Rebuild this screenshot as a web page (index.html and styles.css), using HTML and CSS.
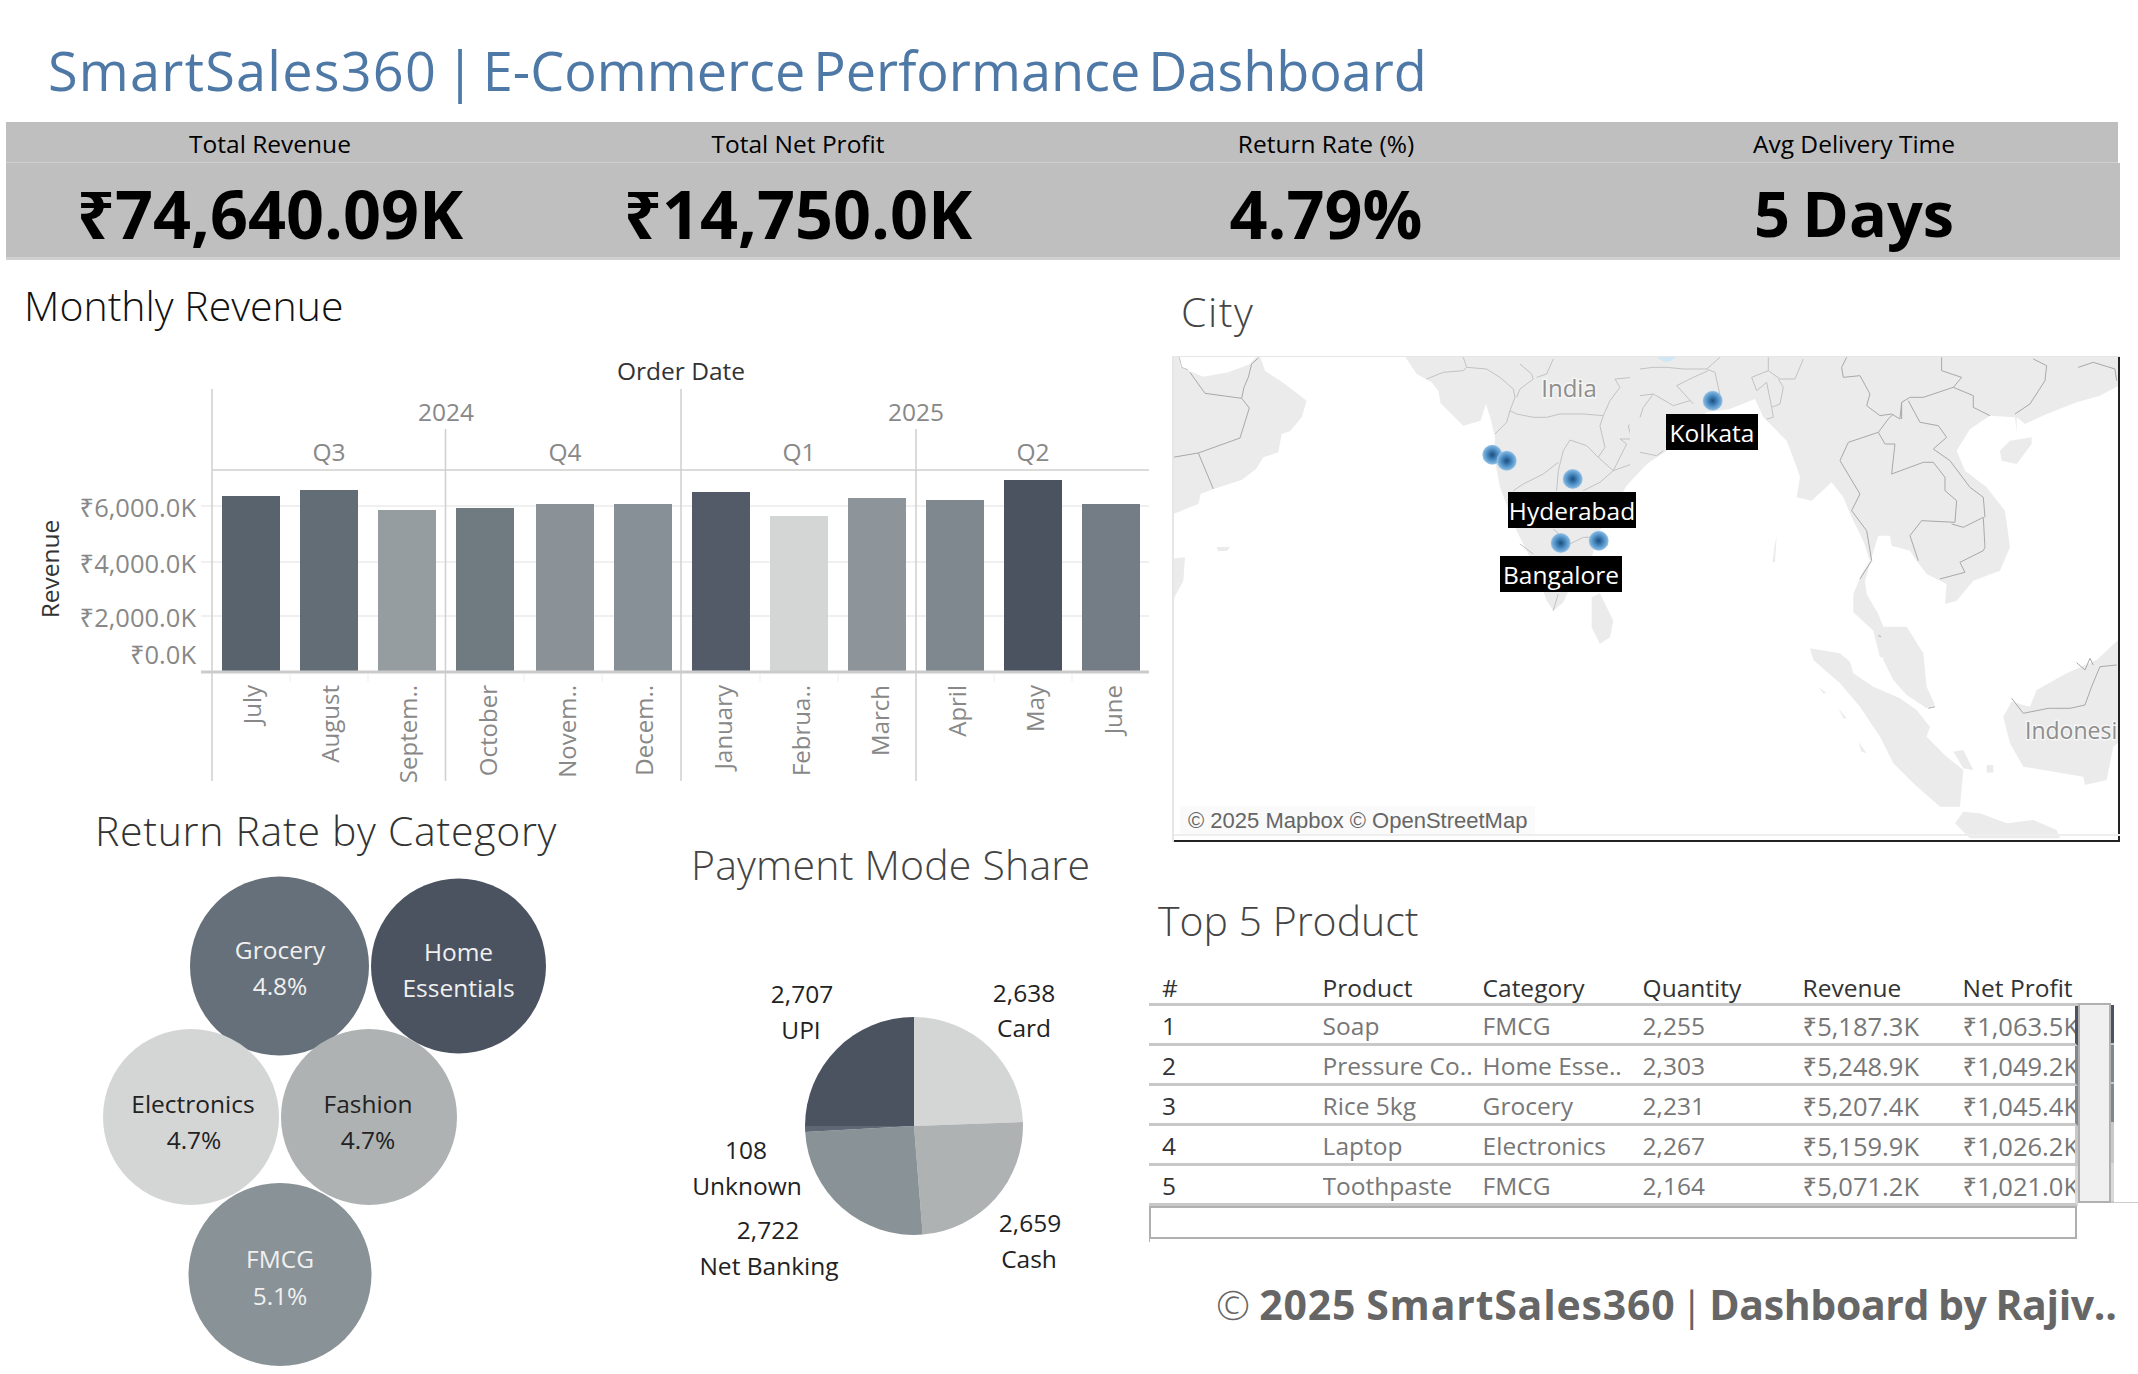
FILE: index.html
```html
<!DOCTYPE html>
<html>
<head>
  <meta charset="utf-8">
  <title>SmartSales360</title>
  <link rel="stylesheet" href="styles.css">
</head>
<body>
  <div class="page">
    <h1 class="page-title"><span class="brand">SmartSales360</span> | E-Commerce Performance Dashboard</h1>

    <div class="kpi-band">
      <div class="kpi-row kpi-labels">
        <div>Total Revenue</div>
        <div>Total Net Profit</div>
        <div>Return Rate (%)</div>
        <div>Avg Delivery Time</div>
      </div>
      <div class="kpi-row kpi-values">
        <div>₹74,640.09K</div>
        <div>₹14,750.0K</div>
        <div>4.79%</div>
        <div class="kpi-days">5 Days</div>
      </div>
    </div>

    <div class="main">
      <div class="left-col">
        <section class="monthly">
          <h2 class="sheet-title monthly-title">Monthly Revenue</h2>
          <svg class="chart" width="1149" height="450" viewBox="0 340 1149 450">
            <text class="axis-title" x="681" y="380" text-anchor="middle">Order Date</text>
            <text class="head-label" x="446" y="421" text-anchor="middle">2024</text>
            <text class="head-label" x="916" y="421" text-anchor="middle">2025</text>
            <text class="head-label" x="329" y="461" text-anchor="middle">Q3</text>
            <text class="head-label" x="565" y="461" text-anchor="middle">Q4</text>
            <text class="head-label" x="799" y="461" text-anchor="middle">Q1</text>
            <text class="head-label" x="1033" y="461" text-anchor="middle">Q2</text>

            <g class="grid-lines">
              <line x1="201" y1="506" x2="1150" y2="506"/>
              <line x1="201" y1="562" x2="1150" y2="562"/>
              <line x1="201" y1="616" x2="1150" y2="616"/>
            </g>

            <rect x="222" y="496" width="58" height="175" fill="#59636e"/>
            <rect x="300" y="490" width="58" height="181" fill="#636d76"/>
            <rect x="378" y="510" width="58" height="161" fill="#959da0"/>
            <rect x="456" y="508" width="58" height="163" fill="#6f7a81"/>
            <rect x="536" y="504" width="58" height="167" fill="#8a9298"/>
            <rect x="614" y="504" width="58" height="167" fill="#879096"/>
            <rect x="692" y="492" width="58" height="179" fill="#535b68"/>
            <rect x="770" y="516" width="58" height="155" fill="#d4d5d5"/>
            <rect x="848" y="498" width="58" height="173" fill="#8d959b"/>
            <rect x="926" y="500" width="58" height="171" fill="#7f888e"/>
            <rect x="1004" y="480" width="58" height="191" fill="#4b5260"/>
            <rect x="1082" y="504" width="58" height="167" fill="#747d85"/>

            <g class="frame-lines">
              <line x1="212" y1="389" x2="212" y2="781"/>
              <line x1="681" y1="389" x2="681" y2="781"/>
              <line x1="1150" y1="389" x2="1150" y2="781"/>
              <line x1="445.5" y1="429" x2="445.5" y2="781"/>
              <line x1="916" y1="429" x2="916" y2="781"/>
              <line x1="212" y1="470" x2="1150" y2="470"/>
            </g>
            <line class="baseline" x1="201" y1="672" x2="1150" y2="672"/>
            <g class="month-ticks">
              <line x1="290" y1="674" x2="290" y2="682"/>
              <line x1="368" y1="674" x2="368" y2="682"/>
              <line x1="524" y1="674" x2="524" y2="682"/>
              <line x1="602" y1="674" x2="602" y2="682"/>
              <line x1="760" y1="674" x2="760" y2="682"/>
              <line x1="838" y1="674" x2="838" y2="682"/>
              <line x1="994" y1="674" x2="994" y2="682"/>
              <line x1="1072" y1="674" x2="1072" y2="682"/>
            </g>

            <text class="axis-title" transform="translate(59 569) rotate(-90)" text-anchor="middle">Revenue</text>
            <text class="tick-label" x="196" y="517" text-anchor="end">₹6,000.0K</text>
            <text class="tick-label" x="196" y="573" text-anchor="end">₹4,000.0K</text>
            <text class="tick-label" x="196" y="627" text-anchor="end">₹2,000.0K</text>
            <text class="tick-label" x="196" y="664" text-anchor="end">₹0.0K</text>

            <g class="month-labels">
              <text transform="translate(261 685) rotate(-90)" text-anchor="end">July</text>
              <text transform="translate(339 685) rotate(-90)" text-anchor="end">August</text>
              <text transform="translate(417 685) rotate(-90)" text-anchor="end">Septem..</text>
              <text transform="translate(497 685) rotate(-90)" text-anchor="end">October</text>
              <text transform="translate(576 685) rotate(-90)" text-anchor="end">Novem..</text>
              <text transform="translate(653 685) rotate(-90)" text-anchor="end">Decem..</text>
              <text transform="translate(732 685) rotate(-90)" text-anchor="end">January</text>
              <text transform="translate(810 685) rotate(-90)" text-anchor="end">Februa..</text>
              <text transform="translate(889 685) rotate(-90)" text-anchor="end">March</text>
              <text transform="translate(966 685) rotate(-90)" text-anchor="end">April</text>
              <text transform="translate(1044 685) rotate(-90)" text-anchor="end">May</text>
              <text transform="translate(1122 685) rotate(-90)" text-anchor="end">June</text>
            </g>
          </svg>
        </section>

        <div class="bottom-row">
          <section class="returns">
            <h2 class="sheet-title returns-title">Return Rate by Category</h2>
            <svg class="chart" width="640" height="504" viewBox="0 870 640 504">
              <circle cx="279.5" cy="966" r="89.5" fill="#66707a"/>
              <circle cx="458.5" cy="966" r="87.5" fill="#4b5361"/>
              <circle cx="191" cy="1117" r="88" fill="#d4d5d5"/>
              <circle cx="369" cy="1117" r="88" fill="#aeb2b3"/>
              <circle cx="280" cy="1274.5" r="91.5" fill="#899297"/>
              <g class="bubble-text light" text-anchor="middle">
                <text x="280" y="959">Grocery</text>
                <text x="280" y="995">4.8%</text>
                <text x="458.5" y="961">Home</text>
                <text x="458.5" y="997">Essentials</text>
                <text x="280" y="1268">FMCG</text>
                <text x="280" y="1305">5.1%</text>
              </g>
              <g class="bubble-text dark" text-anchor="middle">
                <text x="193" y="1113">Electronics</text>
                <text x="194" y="1149">4.7%</text>
                <text x="368" y="1113">Fashion</text>
                <text x="368" y="1149">4.7%</text>
              </g>
            </svg>
          </section>

          <section class="payments">
            <h2 class="sheet-title payments-title">Payment Mode Share</h2>
            <svg class="chart" width="509" height="474" viewBox="640 900 509 474">
              <path d="M914 1126 L914 1017 A109 109 0 0 1 1022.9 1122 Z" fill="#d4d5d5"/>
              <path d="M914 1126 L1022.9 1122 A109 109 0 0 1 922.7 1234.6 Z" fill="#aeb2b3"/>
              <path d="M914 1126 L922.7 1234.6 A109 109 0 0 1 805.2 1132 Z" fill="#899297"/>
              <path d="M914 1126 L805.2 1132 A109 109 0 0 1 805 1126 Z" fill="#5e6874"/>
              <path d="M914 1126 L805 1126 A109 109 0 0 1 914 1017 Z" fill="#4b5361"/>
              <g class="pie-text" text-anchor="middle">
                <text x="802" y="1003">2,707</text>
                <text x="801" y="1039">UPI</text>
                <text x="1024" y="1002">2,638</text>
                <text x="1024" y="1037">Card</text>
                <text x="746" y="1159">108</text>
                <text x="747" y="1195">Unknown</text>
                <text x="768" y="1239">2,722</text>
                <text x="769" y="1275">Net Banking</text>
                <text x="1030" y="1232">2,659</text>
                <text x="1029" y="1268">Cash</text>
              </g>
            </svg>
          </section>
        </div>
      </div>

      <div class="right-col">
        <h2 class="sheet-title city-title">City</h2>
        <div class="map">
          <svg width="948" height="486" viewBox="1172 356 948 486">
            <defs>
              <radialGradient id="pin">
                <stop offset="0" stop-color="#1f4e7c"/>
                <stop offset="0.25" stop-color="#2f6aa0"/>
                <stop offset="0.55" stop-color="#4f8fc4"/>
                <stop offset="0.85" stop-color="#78afdb"/>
                <stop offset="1" stop-color="#a7cbe9"/>
              </radialGradient>
            </defs>

            <!-- left half, coords are 3x from the map corner -->
            <g transform="translate(1170 354) scale(0.3333)">
              <g class="land">
                <path d="M0 0 L28 0 30 38 60 52 100 68 175 55 235 32 268 0 285 50 345 90 410 140 395 190 360 232 335 240 325 295 280 310 258 345 215 378 130 405 92 420 85 450 0 484Z"/>
                <path d="M450 0 L700 0 740 60 785 85 805 110 812 148 880 215 932 200 948 150 962 195 975 250 972 305 990 400 1040 530 1100 650 1130 740 1150 770 1180 745 1205 690 1265 610 1290 530 1320 480 1370 395 1430 330 1530 265 1530 0Z"/>
                <path d="M1265 730 L1290 718 1330 800 1320 850 1290 870 1265 820Z"/>
                <path d="M140 580 L180 578 172 590 145 592Z"/>
                <path d="M0 615 L45 610 40 680 0 755Z"/>
              </g>
              <g class="borders">
                <path class="dark-border" d="M60 55 L105 118 215 133 238 162 210 252 85 297 8 310M85 297 L130 405M215 133 L222 100 235 70 245 30 265 12"/>
                <path d="M28 10 L35 40 55 48M770 75 L820 55 880 50 890 40 880 10M890 40 L950 45 990 70 1030 105 1035 130 1020 170 1010 205 975 240M1020 170 L1040 180 1090 190 1130 190 1170 180 1240 180 1300 185 1320 140 1350 100 1335 75 1390 70 1415 65 1410 40 1415 10M1300 185 L1290 215 1305 280 1285 310 1330 350 1370 270 1350 255 1385 255 1375 215 1415 190 1420 145 1460 135 1500 155M1160 410 L1165 350 1180 290 1200 258 1250 275 1285 310M1030 410 L1060 390 1120 360 1165 325M1240 410 L1290 385 1330 350 1400 325 1450 300M1050 30 L1085 60 1090 75 1050 105 1040 130M1150 15 L1130 60 1100 70M1150 525 L1200 570 1240 550 1280 550M1150 770 L1165 720M1050 570 L1090 600"/>
              </g>
            </g>

            <!-- right half -->
            <g transform="translate(1640 354) scale(0.3333)">
              <g class="land">
                <path d="M-30 0 L1445 0 1445 90 1380 125 1310 145 1220 180 1155 210 1130 190 1130 235 1125 190 1050 185 990 225 950 290 975 350 1040 400 1095 470 1110 580 1080 650 1000 680 950 740 915 750 920 690 860 660 830 620 810 590 755 575 750 545 715 545 695 610 675 680 680 720 715 780 735 830 800 860 850 910 720 910 700 830 640 775 640 720 665 660 690 620 670 560 635 490 610 430 575 385 515 440 470 430 480 370 470 340 440 260 370 190 345 135 270 165 200 175 80 280 -30 375Z"/>
                <path d="M1080 290 L1110 260 1175 250 1175 270 1130 330 1085 320Z"/>
                <path d="M410 545 L405 625 398 625 403 580Z"/>
              </g>
              <g class="borders">
                <path d="M0 45 L40 40 80 40 130 45 200 45 240 10M200 45 L225 55 235 100 245 145M110 95 L160 70 205 50M110 95 L160 150M40 120 L10 160 0 190M0 125 L40 120 100 155 150 140M335 70 L385 50 385 10M335 70 L350 110 380 85 395 160 400 190 380 195M385 50 L420 75 465 75 490 15M415 75 L430 100 420 150 395 160M0 295 L50 305 70 290"/>
                <path class="dark-border" d="M620 10 L605 40 610 70 660 65 690 120 680 155 720 185 755 180 780 195 785 145 810 130 850 130 940 100 1000 125 1000 160 1050 185M905 10 L905 50 965 70 940 100M1180 15 L1220 35 1215 80 1170 150 1125 180M1315 40 L1360 25 1425 45 1430 80M785 145 L785 195M805 140 L840 205 895 215 920 250 880 285 930 320 990 400 1030 430 1035 490M715 235 L745 195 760 180M715 235 L625 265 600 320 660 420 635 470 680 530 695 620 660 675M715 235 L735 270 765 270 755 360 850 325 880 325 915 370 915 410 950 440 945 505 845 500 810 545 835 620M935 510 L970 520 1030 490 1035 580 1030 590 960 625 975 655 900 675M715 845 L760 860 755 880 800 855"/>
              </g>
            </g>

            <!-- bottom right, islands -->
            <g transform="translate(1640 630) scale(0.3333)">
              <g class="land">
                <path d="M510 55 L600 70 630 95 640 130 700 170 780 205 830 240 870 290 860 320 920 380 970 420 960 530 900 530 820 460 760 400 720 320 660 230 600 160 520 90Z"/>
                <path d="M970 545 L1020 550 1100 580 1180 570 1250 600 1260 625 990 625 945 580Z"/>
                <path d="M720 -10 L800 -10 850 70 860 170 885 225 860 235 800 195 760 150 730 90Z"/>
                <path d="M1445 20 L1370 90 1280 130 1190 180 1170 230 1115 215 1090 260 1110 340 1150 410 1210 420 1330 440 1335 465 1400 450 1420 350 1445 330Z"/>
                <path d="M535 170 L560 190 550 190Z"/>
                <path d="M595 235 L620 265 610 265Z"/>
                <path d="M655 335 L680 370 665 365Z"/>
                <path d="M1040 405 L1060 405 1060 428 1040 428Z"/>
                <path d="M940 365 L970 360 1000 420 970 415Z"/>
              </g>
              <g class="borders">
                <path class="dark-border" d="M1115 205 L1150 250 1225 235 1290 235 1335 225 1355 170 1380 110 1430 105M1310 98 L1335 120 1350 85 1360 105M865 235 L885 230"/>
              </g>
            </g>

            <text class="map-place" x="1569" y="397" text-anchor="middle">India</text>
            <text class="map-place indonesia" x="2025" y="739">Indonesi</text>

            <circle cx="1666.7" cy="352" r="10" fill="#cfe6f5"/>
            <circle cx="1492.3" cy="454.7" r="10" fill="url(#pin)"/>
            <circle cx="1506.7" cy="460.7" r="10" fill="url(#pin)"/>
            <circle cx="1572.7" cy="479" r="10" fill="url(#pin)"/>
            <circle cx="1560.7" cy="543" r="10" fill="url(#pin)"/>
            <circle cx="1598.7" cy="540.7" r="10" fill="url(#pin)"/>
            <circle cx="1712.7" cy="400.7" r="10" fill="url(#pin)"/>
          </svg>
          <span class="pin-label kolkata">Kolkata</span>
          <span class="pin-label hyderabad">Hyderabad</span>
          <span class="pin-label bangalore">Bangalore</span>
          <div class="attribution">© 2025 Mapbox © OpenStreetMap</div>
        </div>

        <h2 class="sheet-title top-title">Top 5 Product</h2>
        <div class="tbl-head">
          <div>#</div><div>Product</div><div>Category</div><div>Quantity</div><div>Revenue</div><div>Net Profit</div>
        </div>
        <div class="tbl-wrap">
          <div class="tbl-rows">
            <div class="tbl-row"><div class="rank">1</div><div>Soap</div><div>FMCG</div><div>2,255</div><div>₹5,187.3K</div><div>₹1,063.5K</div></div>
            <div class="tbl-row"><div class="rank">2</div><div>Pressure Co..</div><div>Home Esse..</div><div>2,303</div><div>₹5,248.9K</div><div>₹1,049.2K</div></div>
            <div class="tbl-row"><div class="rank">3</div><div>Rice 5kg</div><div>Grocery</div><div>2,231</div><div>₹5,207.4K</div><div>₹1,045.4K</div></div>
            <div class="tbl-row"><div class="rank">4</div><div>Laptop</div><div>Electronics</div><div>2,267</div><div>₹5,159.9K</div><div>₹1,026.2K</div></div>
            <div class="tbl-row"><div class="rank">5</div><div>Toothpaste</div><div>FMCG</div><div>2,164</div><div>₹5,071.2K</div><div>₹1,021.0K</div></div>
          </div>
          <div class="scroll-thumb"></div>
          <div class="scroll-strip">
            <div></div><div></div><div></div><div></div><div></div>
          </div>
          <div class="scroll-tail"></div>
        </div>
        <div class="tbl-empty"></div>
        <div class="credit"><span class="thin">©</span> <span class="brand">2025 SmartSales360</span> <span class="thin credit-bar">|</span> <span class="credit-tail">Dashboard by Rajiv..</span></div>
      </div>
    </div>
  </div>
</body>
</html>
```

FILE: styles.css
```css
* {
  box-sizing: border-box;
}

html, body {
  margin: 0;
  background: white;
}

body {
  font-family: "Open Sans", "Noto Sans", sans-serif;
  color: #333;
}

.page {
  width: 2138px;
  height: 1374px;
  overflow: hidden;
}

h1, h2 {
  margin: 0;
  font-weight: 400;
}

.page-title {
  height: 122px;
  padding: 40px 0 0 48px;
  font-size: 54px;
  line-height: 61px;
  word-spacing: -6px;
  color: #4e79a7;
  white-space: nowrap;
}

.page-title .brand {
  letter-spacing: 1.25px;
}

/* KPI band */
.kpi-band {
  margin-left: 6px;
}

.kpi-row {
  display: grid;
  grid-template-columns: repeat(4, 528px);
  background: #bfbfbf;
  color: #000;
  text-align: center;
}

.kpi-labels {
  width: 2112px;
  height: 41px;
  font-size: 24.5px;
  line-height: 44px;
  border-bottom: 1px solid #cfcfcf;
}

.kpi-values {
  width: 2114px;
  height: 97px;
  font-size: 66.5px;
  font-weight: 700;
  line-height: 100px;
  border-bottom: 3px solid #d0d0d0;
}

.kpi-days {
  font-size: 63px;
  word-spacing: -4px;
}

/* dashboard columns */
.main {
  display: grid;
  grid-template-columns: 1149px 989px;
}

.sheet-title {
  font-size: 41px;
  font-weight: 300;
  white-space: nowrap;
}

.chart {
  display: block;
}

.monthly-title {
  height: 80px;
  padding: 20px 0 0 24px;
  line-height: 50px;
  color: #111;
}

.axis-title {
  font-size: 24.5px;
  fill: #333;
}

.head-label {
  font-size: 24.5px;
  fill: #888;
}

.tick-label {
  font-size: 25.5px;
  fill: #888;
}

.grid-lines line {
  stroke: #f0f0f0;
  stroke-width: 2;
}

.frame-lines line {
  stroke: #cfcfcf;
  stroke-width: 1.5;
}

.baseline {
  stroke: #cbcbcb;
  stroke-width: 3;
}

.month-ticks line {
  stroke: #eee;
  stroke-width: 1;
}

.month-labels text {
  font-size: 24px;
  fill: #888;
}

.bottom-row {
  display: flex;
}

.returns {
  width: 640px;
}

.returns-title {
  height: 80px;
  padding: 15px 0 0 95px;
  line-height: 50px;
  letter-spacing: 0.7px;
}

.bubble-text {
  font-size: 24.5px;
}

.bubble-text.light {
  fill: #f0f0f0;
}

.bubble-text.dark {
  fill: #222;
}

.payments {
  width: 509px;
}

.payments-title {
  height: 110px;
  padding: 49px 0 0 51px;
  line-height: 50px;
  letter-spacing: 0.2px;
  color: #444;
}

.pie-text {
  font-size: 24.5px;
  fill: #222;
}

/* map */
.city-title {
  height: 96px;
  padding: 26px 0 0 32px;
  line-height: 50px;
  letter-spacing: 1.5px;
  color: #444;
}

.map {
  position: relative;
  width: 948px;
  height: 486px;
  margin-left: 23px;
  border-top: 1px solid #e6e6e6;
  border-left: 2px solid #e6e6e6;
  overflow: hidden;
}

.map svg {
  display: block;
  margin: -1px 0 0 -2px;
}

.map::after {
  content: '';
  position: absolute;
  left: -2px;
  right: 0;
  bottom: 0;
  height: 4px;
  border-top: 2px solid #eee;
  border-bottom: 2px solid #222;
}

.map::before {
  content: '';
  position: absolute;
  top: 0;
  right: 0;
  bottom: 0;
  width: 2px;
  background: #222;
}

.land {
  filter: blur(1.5px);
}

.land path {
  fill: #ebebeb;
}

.borders path {
  fill: none;
  stroke: #c2c2c2;
  stroke-width: 3;
}

.borders .dark-border {
  stroke: #a8a8a8;
}

.map-place {
  font-size: 24px;
  fill: #8e8e8e;
  stroke: #f5f5f5;
  stroke-width: 3px;
  paint-order: stroke;
}

.map-place.indonesia {
  font-size: 23px;
}

.pin-label {
  position: absolute;
  height: 36px;
  background: #000;
  color: white;
  font-size: 24.5px;
  line-height: 38px;
  text-align: center;
  white-space: nowrap;
}

.kolkata {
  left: 492px;
  top: 57px;
  width: 92px;
}

.hyderabad {
  left: 334px;
  top: 135px;
  width: 128px;
}

.bangalore {
  left: 326px;
  top: 199px;
  width: 122px;
}

.attribution {
  position: absolute;
  left: 6px;
  bottom: 7px;
  height: 29px;
  padding: 0 8px;
  background: #fafafa;
  color: #666;
  font-family: "Liberation Sans", sans-serif;
  font-size: 22px;
  line-height: 29px;
}

/* table */
.top-title {
  height: 126px;
  padding: 53px 0 0 9px;
  line-height: 50px;
  color: #444;
}

.tbl-head, .tbl-row {
  display: grid;
  grid-template-columns: 160.6px repeat(4, 160px) 1fr;
  width: 927px;
  padding-left: 13px;
  font-size: 24.5px;
}

.tbl-head > div, .tbl-row > div {
  overflow: hidden;
  white-space: nowrap;
}

.tbl-head {
  height: 35px;
  line-height: 40px;
  color: #333;
}

.tbl-wrap {
  position: relative;
  display: flex;
  height: 200px;
}

.tbl-rows {
  width: 929px;
  border-top: 3px solid #c8c8c8;
}

.tbl-row {
  width: 929px;
  height: 40px;
  line-height: 40px;
  color: #777;
  border-bottom: 3px solid #c8c8c8;
  border-right: 3px solid #4b5361;
}

.tbl-row > div:nth-child(n+5) {
  font-size: 25.5px;
}

.tbl-row:nth-child(2), .tbl-row:nth-child(3) {
  border-right-color: #7e888e;
}

.tbl-row:nth-child(4) {
  border-right-color: #c8c8c8;
}

.tbl-row:nth-child(5) {
  border-right-color: #d9d9d9;
}

.tbl-row .rank {
  color: #333;
}

.scroll-thumb {
  width: 33px;
  background: #f0f0f0;
  border: 2px solid #b0b0b0;
}

.scroll-strip {
  display: flex;
  flex-direction: column;
  width: 3px;
  padding-top: 2px;
}

.scroll-strip div {
  height: 40px;
  background: #4b5361;
  border-bottom: 2px solid #c8c8c8;
}

.scroll-strip div:nth-child(2), .scroll-strip div:nth-child(3) {
  background: #7e888e;
}

.scroll-strip div:nth-child(4) {
  background: #c8c8c8;
}

.scroll-strip div:nth-child(5) {
  background: #d9d9d9;
}

.scroll-tail {
  flex: 1;
  border-bottom: 1.5px solid #ccc;
}

.tbl-empty {
  position: relative;
  width: 928px;
  height: 33px;
  margin-top: 3px;
  border: 2px solid #b0b0b0;
}

.tbl-empty::after {
  content: '';
  position: absolute;
  left: -2px;
  top: 100%;
  width: 1px;
  height: 5px;
  background: #b0b0b0;
}

.credit {
  padding: 40px 0 0 67px;
  font-size: 41px;
  font-weight: 700;
  line-height: 50px;
  word-spacing: -1.5px;
  color: #666;
  white-space: nowrap;
}

.credit .thin {
  font-weight: 300;
}

.credit .brand {
  letter-spacing: 0.8px;
}

.credit .credit-bar {
  margin-left: -4px;
  font-weight: 400;
}

.credit .credit-tail {
  margin-left: -3px;
  letter-spacing: -0.35px;
}
```
